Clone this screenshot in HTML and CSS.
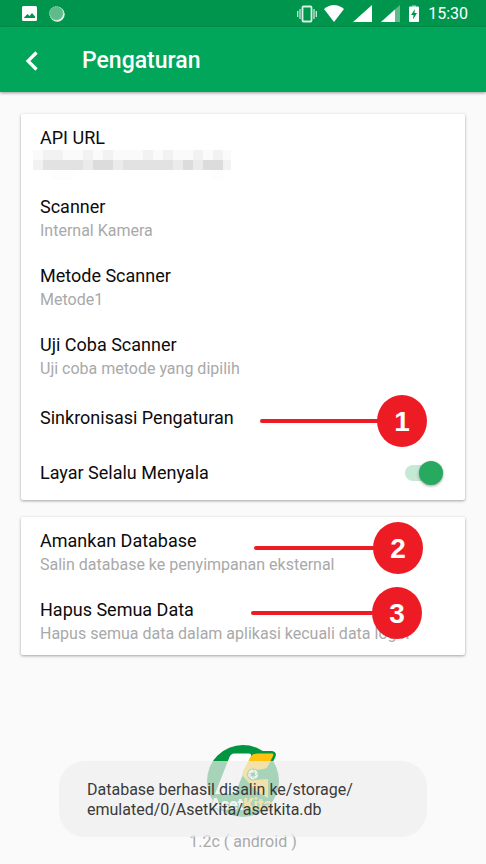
FILE: index.html
```html
<!DOCTYPE html>
<html lang="id">
<head>
<meta charset="utf-8">
<meta name="viewport" content="width=device-width, initial-scale=1">
<title>Pengaturan</title>
<link rel="stylesheet" href="styles.css">
</head>
<body>
<div class="status">
  <div class="status-group left">
    <svg width="15" height="15" viewBox="0 0 15 15"><path fill="#fff" fill-rule="evenodd" d="M1.500 0h12q1.500 0 1.500 1.500v12q0 1.500-1.500 1.500h-12q-1.500 0-1.500-1.500v-12q0-1.500 1.500-1.500zM2 12h11v-1.500l-3-3.500-2.500 3-2-2-3.500 3.500z"/></svg>
    <svg width="16" height="16" viewBox="0 0 16 16"><circle cx="8.200" cy="8.200" r="7.500" fill="#e6f7ee"/><circle cx="7.300" cy="7.300" r="7" fill="#5fba8c"/><circle cx="7.300" cy="7.300" r="6.700" fill="none" stroke="#a5d9be" stroke-dasharray="1 1"/></svg>
  </div>
  <div class="status-group right">
    <svg class="vibrate" width="20" height="18" viewBox="0 0 20 18"><rect x="5.500" y="1.500" width="9" height="15" rx="1" fill="none" stroke="#d9f0e4" stroke-width="1.800"/><path d="M.7 6v6M3 4v10M17 4v10M19.300 6v6" stroke="#d9f0e4" stroke-width="1.200"/></svg>
    <svg class="wifi" width="20" height="17" viewBox="0 0 20 17"><path fill="#fff" d="M0 4Q10-4 20 4L10 17z"/></svg>
    <svg width="19" height="17" viewBox="0 0 19 17"><path fill="#fff" d="M0 17L19 0v17z"/></svg>
    <svg width="19" height="17" viewBox="0 0 19 17"><path fill="#5fba8c" d="M0 17L19 0v17z"/><path fill="#fff" d="M0 17L14 4.500V17z"/></svg>
    <svg width="10" height="17" viewBox="0 0 10 17"><path fill="#5fba8c" d="M3 0h4v2H3z"/><rect y="1.500" width="10" height="15.500" rx="1" fill="#fff"/><path fill="#00954d" d="M6 4L2 10h2.500L4 14.500 8 8H5.500z"/></svg>
    <time>15:30</time>
  </div>
</div>
<header class="bar">
  <button class="back" type="button" aria-label="Kembali"><svg width="14" height="20" viewBox="0 0 14 20"><path d="M11.500 1.500L3 10l8.500 8.500" fill="none" stroke="#fff" stroke-width="3.200"/></svg></button>
  <h1>Pengaturan</h1>
</header>
<main>
  <section class="card">
    <div class="row"><h2>API URL</h2>
      <svg class="masked" width="200" height="30" viewBox="0 0 200 30" shape-rendering="crispEdges"><path fill="#fafafa" d="M2 0h198v20H2z"/><path fill="#fdfdfd" d="M22 20h20v10H22zM182 20h10v10h-10z"/><path fill="#f2f2f2" d="M12 0h20v10H12zM52 0h10v10H52zM72 0h10v10H72zM112 0h10v10h-10zM132 0h10v10h-10zM162 0h10v10h-10zM182 0h10v10h-10zM2 10h198v10H2z"/><path fill="#e2e2e2" d="M12 10h30v10H12zM42 10h10v10H42zM92 10h50v10H92z"/><path fill="#ebebeb" d="M52 10h10v10H52zM82 10h10v10H82zM142 10h10v10h-10zM162 10h10v10h-10z"/><path fill="#dcdcdc" d="M62 10h20v10H62zM152 10h10v10h-10zM172 10h20v10h-20z"/></svg>
    </div>
    <div class="row"><h2>Scanner</h2><p>Internal Kamera</p></div>
    <div class="row"><h2>Metode Scanner</h2><p>Metode1</p></div>
    <div class="row"><h2>Uji Coba Scanner</h2><p>Uji coba metode yang dipilih</p></div>
    <div class="row single"><h2>Sinkronisasi Pengaturan</h2><span class="callout first">1</span></div>
    <div class="row single"><h2><label for="awake">Layar Selalu Menyala</label></h2><input id="awake" class="switch" type="checkbox" role="switch" checked></div>
  </section>
  <section class="card">
    <div class="row"><h2>Amankan Database</h2><p>Salin database ke penyimpanan eksternal</p><span class="callout second">2</span></div>
    <div class="row"><h2>Hapus Semua Data</h2><p>Hapus semua data dalam aplikasi kecuali data login</p><span class="callout third">3</span></div>
  </section>
</main>
<footer>
  <svg width="74" height="74" viewBox="0 0 74 74" role="img" aria-label="AsetKita">
    <circle cx="37" cy="37" r="36" fill="#00953f"/>
    <path fill="#00953f" d="M46 7h20q5 1 3.500 5.500L62 29H40z"/>
    <path fill="#fff" d="M28 9.500h15q3 0 2 3L35 35l-6 15H9L23.500 13q1.500-3.500 4.500-3.500z"/>
    <path fill="#ffc20e" d="M51.500 9.500H66q2 0 1 2.500l-5 10q-1.500 3-4 3l-8 1-1 10 13-1v19L50 47 37 32q-1-2 0-4.500l7.500-14.500q2-3.500 7-3.500z"/>
    <circle cx="47" cy="30.500" r="6" fill="#00953f"/>
    <circle cx="47" cy="30.500" r="3.600" fill="none" stroke="#fff" stroke-width="2.800"/>
    <path d="M47 25l2 4M52 29l-3 3M50 35l-4-2M44 35l0-4M42 30l4-1" stroke="#00953f" stroke-width=".7"/>
    <text class="logo-text" x="4" y="66" fill="#fff">Aset<tspan fill="#ffc20e">Kita</tspan></text>
  </svg>
  <small>1.2c ( android )</small>
</footer>
<div class="toast" role="status">Database berhasil disalin ke/storage/<wbr>emulated/0/AsetKita/asetkita.db</div>
</body>
</html>
```
FILE: styles.css
```css
* { box-sizing: border-box; }
body {
  margin: 0;
  min-height: 100vh;
  position: relative;
  background: #fafafa;
  color: #0c0c0c;
  font-family: Roboto, "Liberation Sans", sans-serif;
}
h1, h2, p { margin: 0; font-weight: 400; }
svg { display: block; flex: none; }
.status {
  height: 27px;
  padding: 0 18px 0 22px;
  display: flex;
  align-items: center;
  justify-content: space-between;
  background: #00954d;
  color: #fff;
}
.status-group { display: flex; align-items: center; gap: 9px; }
.status-group.left { gap: 12px; }
.wifi { margin-left: -2px; }
time { font-size: 16px; line-height: 20px; }
.bar {
  height: 65px;
  padding: 2px 21px 0;
  display: flex;
  align-items: center;
  gap: 43px;
  background: #02a65a;
  color: #fff;
  box-shadow: 0 1px 3px rgba(0, 0, 0, .4);
}
.back { padding: 0 0 0 4px; border: 0; background: none; }
.bar h1 { font-size: 23px; line-height: 28px; font-weight: 500; }
main { padding: 22px 21px 0; display: grid; gap: 17px; }
.card { background: #fff; border-radius: 2px; box-shadow: 0 1px 3px rgba(0, 0, 0, .36); }
.row { position: relative; min-height: 69px; padding: 12px 19px 9px; }
.row h2 { font-size: 18px; line-height: 24px; }
.row p { font-size: 16px; line-height: 24px; color: #a9a9a9; }
.row.single {
  min-height: 55px;
  padding: 0 22px 0 19px;
  display: flex;
  align-items: center;
  justify-content: space-between;
}
.masked { margin: 0 0 -6px -9px; }
.switch {
  appearance: none;
  width: 38px;
  height: 16px;
  margin: 0;
  display: flex;
  align-items: center;
  justify-content: flex-end;
  background: #c5e9d4;
  border-radius: 8px;
}
.switch::before {
  content: "";
  flex: none;
  width: 24px;
  height: 24px;
  border-radius: 50%;
  background: #27aa5f;
  box-shadow: 0 1px 3px rgba(0, 0, 0, .4);
}
.callout {
  --lead: 119px;
  position: absolute;
  width: 50px;
  height: 52px;
  border-radius: 50%;
  background: #ed1c24;
  color: #fff;
  font: 700 28px/54px "Liberation Sans", sans-serif;
  text-align: center;
}
.callout::before {
  content: "";
  position: absolute;
  right: 48px;
  top: 24px;
  width: var(--lead);
  height: 4px;
  border-radius: 2px;
  background: #ed1c24;
}
.first { right: 38px; top: 5px; }
.second { --lead: 121px; right: 42px; top: 5px; }
.third { --lead: 123px; right: 43px; top: 1px; }
footer { margin-top: 89px; display: flex; flex-direction: column; align-items: center; gap: 12px; }
footer small { font-size: 16px; line-height: 24px; color: #a9a9a9; }
.logo-text {
  font: 900 16px Roboto, sans-serif;
  stroke: #00953f;
  stroke-width: 1px;
  paint-order: stroke;
}
.toast {
  position: absolute;
  left: 59px;
  right: 59px;
  bottom: 27px;
  padding: 19px 28px 17px;
  border-radius: 26px;
  background: rgba(238, 238, 238, .7);
  color: #3a3a3a;
  font-size: 16px;
  line-height: 20px;
}
```
